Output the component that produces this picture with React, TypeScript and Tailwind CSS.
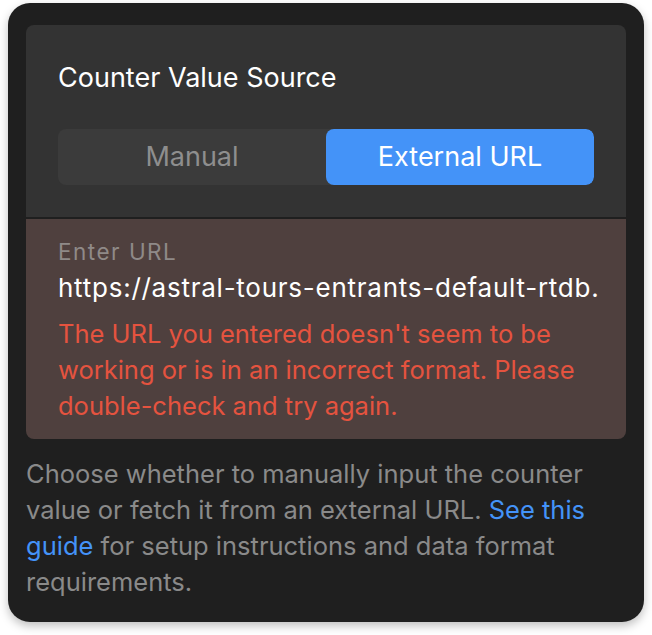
export default function App() {
  return (
    <div className="min-h-screen bg-white pt-[3px] pl-[8px]" style={{ fontFamily: 'Inter, "Noto Sans", sans-serif' }}>
      <div className="w-[636px] h-[619px] rounded-[22px] bg-[#1f1f1f] px-[18px] pt-[22px] shadow-[0_4px_10px_rgba(0,0,0,0.25)]">
        <div className="rounded-[8px] overflow-hidden">
          <div className="bg-[#333333] px-[32px] pt-[37px] pb-[32px]">
            <h2 className="text-[27px] leading-[32px] text-white">Counter Value Source</h2>
            <div className="mt-[35px] flex h-[56px] rounded-[8px] bg-[#3b3b3b] overflow-hidden">
              <button className="flex-1 text-[27px] text-[#8e8e8e]">Manual</button>
              <button className="flex-1 rounded-[8px] bg-[#4493f8] text-[27px] text-white">External URL</button>
            </div>
          </div>
          <div className="h-[2px] bg-[#1f1f1f]" />
          <div className="bg-[#4f403e] pl-[32px] pr-[28px] pt-[18px] pb-[15px]">
            <label className="block text-[22.5px] leading-[30px] tracking-[1.5px] text-[#8f8a88]">Enter URL</label>
            <input
              readOnly
              value="https://astral-tours-entrants-default-rtdb.firebaseio.com/count.json"
              className="mt-[4px] block w-full bg-transparent text-[26px] leading-[34px] tracking-[0.75px] text-white outline-none"
            />
            <p className="mt-[11px] pr-[4px] text-[25.5px] leading-[36px] text-[#e5533f]">
              The URL you entered doesn't seem to be working or is in an incorrect format. Please double-check and try again.
            </p>
          </div>
        </div>
        <p className="mt-[17px] text-[25.5px] leading-[36px] text-[#8a8a8a]">
          Choose whether to manually input the counter value or fetch it from an external URL.{' '}
          <a className="text-[#4493f8]">See this guide</a> for setup instructions and data format requirements.
        </p>
      </div>
    </div>
  )
}
